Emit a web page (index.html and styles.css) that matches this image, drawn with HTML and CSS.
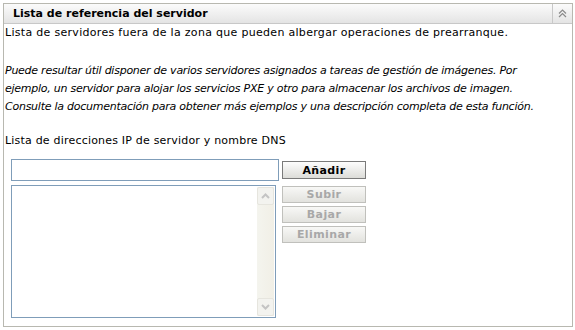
FILE: index.html
```html
<!DOCTYPE html>
<html lang="es">
<head>
    <meta charset="UTF-8">
    <title>Lista de referencia del servidor</title>
    <link rel="stylesheet" href="styles.css">
</head>
<body>
    <div class="panel">
        <div class="panel-header">
            <h2>Lista de referencia del servidor</h2>
            <button class="collapse" title="Contraer">
                <svg width="9" height="9" viewBox="0 0 9 9">
                    <path d="M1 4.5 L4.5 1 L8 4.5 M1 8 L4.5 4.5 L8 8" fill="none" stroke="#8a8a8a" stroke-width="1.2"/>
                </svg>
            </button>
        </div>
        <div class="panel-body">
            <p class="intro">Lista de servidores fuera de la zona que pueden albergar operaciones de prearranque.</p>
            <p class="note">Puede resultar útil disponer de varios servidores asignados a tareas de gestión de imágenes. Por ejemplo, un servidor para alojar los servicios PXE y otro para almacenar los archivos de imagen. Consulte la documentación para obtener más ejemplos y una descripción completa de esta función.</p>
            <p class="label">Lista de direcciones IP de servidor y nombre DNS</p>
            <div class="editor">
                <div class="fields">
                    <input type="text" id="server">
                    <div class="listbox">
                        <div class="scrollbar">
                            <span class="arrow">
                                <svg width="9" height="6" viewBox="0 0 9 6"><path d="M1 5 L4.5 1.5 L8 5" fill="none" stroke="#c4c4c4" stroke-width="2"/></svg>
                            </span>
                            <span class="arrow">
                                <svg width="9" height="6" viewBox="0 0 9 6"><path d="M1 1 L4.5 4.5 L8 1" fill="none" stroke="#c4c4c4" stroke-width="2"/></svg>
                            </span>
                        </div>
                    </div>
                </div>
                <div class="actions">
                    <button class="btn add">Añadir</button>
                    <button class="btn" disabled>Subir</button>
                    <button class="btn" disabled>Bajar</button>
                    <button class="btn" disabled>Eliminar</button>
                </div>
            </div>
        </div>
    </div>
</body>
</html>
```

FILE: styles.css
```css
body {
    margin: 0;
    padding: 3px;
    font-family: "DejaVu Sans", Verdana, sans-serif;
    font-size: 11px;
    color: #000;
    background: #fff;
}
.panel {
    width: 568px;
    height: 322px;
    border: 1px solid #b8b8b0;
    display: flex;
    flex-direction: column;
}
.panel-header {
    display: flex;
    align-items: stretch;
    height: 19px;
    border-bottom: 1px solid #c8c8c8;
    background: linear-gradient(#fbfbfb, #e4e4e4);
}
.panel-header h2 {
    flex: 1;
    margin: 0;
    padding-left: 9px;
    font-size: 11px;
    font-weight: bold;
    line-height: 19px;
}
.collapse {
    width: 20px;
    border: none;
    border-left: 1px solid #c8c8c8;
    background: transparent;
    padding: 0;
    display: flex;
    align-items: center;
    justify-content: center;
}
.panel-body {
    padding: 0 0 0 1px;
    line-height: 18px;
}
.panel-body p {
    margin: 0;
}
.intro {
    letter-spacing: 0.3px;
    margin-bottom: 20px !important;
}
.note {
    max-width: 540px;
    font-style: italic;
    letter-spacing: -0.25px;
    margin-bottom: 16px !important;
}
.label {
    letter-spacing: 0.2px;
}
.editor {
    display: flex;
    gap: 3px;
    margin: 9px 0 0 6px;
}
.fields {
    display: flex;
    flex-direction: column;
    gap: 4px;
}
#server {
    width: 268px;
    height: 22px;
    box-sizing: border-box;
    margin: 0;
    border: 1px solid #7f9db9;
    outline: none;
}
.listbox {
    width: 265px;
    height: 133px;
    box-sizing: border-box;
    border: 1px solid #7f9db9;
    display: flex;
    justify-content: flex-end;
    padding: 1px;
}
.scrollbar {
    width: 17px;
    display: flex;
    flex-direction: column;
    justify-content: space-between;
    background: linear-gradient(to right, #f4f4ee, #f1efe6);
}
.arrow {
    height: 16px;
    display: flex;
    align-items: center;
    justify-content: center;
    border: 1px solid #e6e5de;
    border-radius: 2px;
    background: #f3f3ef;
}
.actions {
    display: flex;
    flex-direction: column;
    gap: 3px;
    padding-top: 2px;
}
.btn {
    width: 84px;
    height: 17px;
    margin: 0;
    padding: 0;
    font-family: inherit;
    font-size: 11px;
    font-weight: bold;
    letter-spacing: 0.4px;
    color: #000;
    border: 1px solid #7a7a7a;
    background: linear-gradient(#fdfdfd, #dcdcd8);
}
.btn.add {
    height: 18px;
    margin-bottom: 4px;
}
.btn:disabled {
    color: #a8a8a8;
    border-color: #c0c0bc;
    background: linear-gradient(#f8f8f6, #e2e2de);
}
```
